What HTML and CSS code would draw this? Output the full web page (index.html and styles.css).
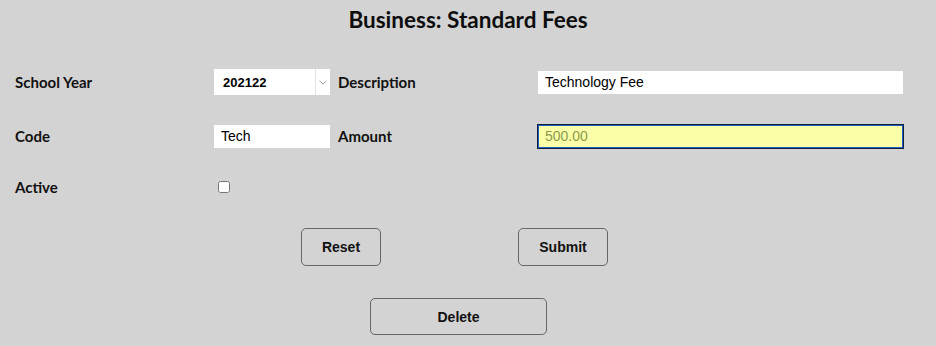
FILE: index.html
```html
<!DOCTYPE html>
<html lang="en">

<head>
    <meta charset="UTF-8">
    <meta name="viewport" content="width=device-width, initial-scale=1.0">
    <title>Business: Standard Fees</title>
    <link rel="stylesheet" href="styles.css">
</head>

<body>

    <h1 class="page-title">Business: Standard Fees</h1>

    <form class="fee-form" id="feeForm">
        <!-- Field grid -->
        <div class="field-grid">
            <label class="field-label" for="schoolYear">School Year</label>
            <div class="select-box">
                <select id="schoolYear" class="select-input">
                    <option>202122</option>
                    <option>202223</option>
                </select>
                <span class="select-arrow">
                    <svg width="8" height="5" viewBox="0 0 8 5"><path d="M0.5 0.8 L4 4 L7.5 0.8" fill="none" stroke="#a0a0a0" stroke-width="1"/></svg>
                </span>
            </div>
            <label class="field-label side-label" for="description">Description</label>
            <input type="text" id="description" class="text-input" value="Technology Fee">

            <label class="field-label" for="code">Code</label>
            <input type="text" id="code" class="text-input" value="Tech">
            <label class="field-label side-label" for="amount">Amount</label>
            <input type="text" id="amount" class="text-input amount-input" value="500.00">

            <label class="field-label" for="active">Active</label>
            <div class="check-cell">
                <input type="checkbox" id="active">
            </div>
        </div>

        <!-- Buttons -->
        <div class="btn-row">
            <button type="reset" class="btn btn-reset">Reset</button>
            <button type="submit" class="btn btn-submit">Submit</button>
        </div>
        <div class="btn-row btn-row-delete">
            <button type="button" class="btn btn-delete">Delete</button>
        </div>
    </form>

</body>

</html>
```

FILE: styles.css
```css
/* Page */
body {
    margin: 0;
    background: #d3d3d3;
    font-family: 'Lato', 'Noto Sans', sans-serif;
    color: #111;
}

.page-title {
    margin: 0;
    padding-top: 6px;
    text-align: center;
    font-size: 22.5px;
    font-weight: 700;
    line-height: 28px;
    color: #0d0d0d;
}

/* Field grid */
.field-grid {
    display: grid;
    grid-template-columns: 199px 116px 208px 365px;
    grid-template-rows: 54px 54px 48px;
    align-items: center;
    margin: 21px 0 0 15px;
}

.field-label {
    font-size: 15px;
    font-weight: 700;
    color: #111;
}

.side-label {
    margin-left: 8px;
}

.text-input {
    box-sizing: border-box;
    width: 100%;
    height: 23px;
    padding: 0 7px;
    border: none;
    outline: none;
    background: #fff;
    font-family: 'Liberation Sans', Arial, sans-serif;
    font-size: 14px;
    color: #000;
}

/* Select */
.select-box {
    display: flex;
    width: 116px;
    height: 26px;
    background: #fff;
}

.select-input {
    flex: 1;
    min-width: 0;
    border: none;
    outline: none;
    background: transparent;
    appearance: none;
    -webkit-appearance: none;
    padding: 0 0 0 9px;
    font-family: 'Liberation Sans', Arial, sans-serif;
    font-size: 13px;
    font-weight: 700;
    color: #000;
}

.select-arrow {
    display: flex;
    align-items: center;
    justify-content: center;
    width: 14px;
    border-left: 1px solid #e2e2e2;
}

/* Amount field (focused) */
.amount-input {
    height: 25px;
    margin-left: -1px;
    width: calc(100% + 2px);
    border: 1px solid #0f1f3f;
    box-shadow: inset 0 0 0 1px #1f5fc0;
    background: #fafea8;
    color: #8d9a4c;
}

.check-cell {
    display: flex;
    align-items: center;
}

.check-cell input {
    margin: 3px 3px 3px 4px;
    width: 12px;
    height: 12px;
}

/* Buttons */
.btn-row {
    display: flex;
    justify-content: center;
    gap: 137px;
    padding-right: 27px;
    margin-top: 17px;
}

.btn-row-delete {
    padding-right: 19px;
    margin-top: 32px;
}

.btn {
    height: 38px;
    border: 1px solid #666;
    border-radius: 5px;
    background: #d3d3d3;
    font-family: 'Liberation Sans', Arial, sans-serif;
    font-size: 14px;
    font-weight: 700;
    color: #111;
    cursor: pointer;
}

.btn-reset {
    width: 80px;
}

.btn-submit {
    width: 90px;
}

.btn-delete {
    width: 177px;
    height: 37px;
}
```
